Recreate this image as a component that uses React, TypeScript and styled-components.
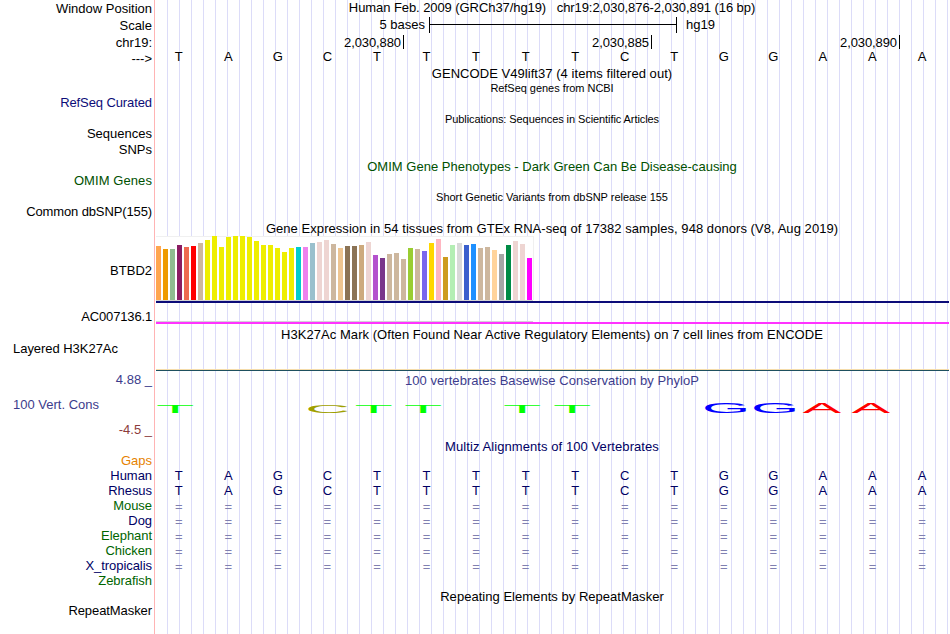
import React from 'react';
import styled, { createGlobalStyle } from 'styled-components';

interface ITextProps {
  gap?: number;
  color?: string;
  spacing?: number;
}

interface ILabelProps extends ITextProps {
  align?: 'left' | 'right';
}

interface ITitleProps extends ITextProps {
  small?: boolean;
}

interface IRuleProps {
  gap?: number;
  size: number;
  color: string;
  length?: string;
}

const GlobalStyle = createGlobalStyle`
  body {
    margin: 0;
    background: #fff;
    font-family: 'Liberation Sans', Arial, Helvetica, sans-serif;
    font-size: 13px;
    line-height: 15px;
    color: #000;
  }
`;

const Browser = styled.div`
  display: flex;
  width: 949px;
  height: 634px;
  overflow: hidden;
`;

const Labels = styled.div`
  box-sizing: border-box;
  width: 155px;
  flex: none;
  padding: 1px 2px 0 13px;
  border-right: 1px solid #ffb4b4;
`;

const Label = styled.div<ILabelProps>`
  height: 15px;
  margin-top: ${props => props.gap || 0}px;
  text-align: ${props => props.align || 'right'};
  color: ${props => props.color || '#000'};
  letter-spacing: ${props => props.spacing || 0}px;
  white-space: pre;
`;

const Tracks = styled.div`
  flex: 1;
  min-width: 0;
  background: repeating-linear-gradient(
    to right,
    transparent 0 11px,
    #dcdcf8 11px 12px
  );
  background-position: 1px 0;
`;

const Title = styled.div<ITitleProps>`
  height: 15px;
  margin-top: ${props => props.gap || 0}px;
  font-size: ${props => (props.small ? 11 : 13)}px;
  letter-spacing: ${props => props.spacing || 0}px;
  color: ${props => props.color || '#000'};
  text-align: center;
  white-space: pre;
`;

const ScaleRow = styled.div`
  display: flex;
  height: 17px;
  margin-top: 2px;
`;

const ScaleText = styled.div<{ side: 'left' | 'right' }>`
  box-sizing: border-box;
  ${props =>
    props.side === 'left'
      ? `width: 274px; padding-right: 4px; text-align: right;`
      : `padding-left: 9px;`}
`;

const ScaleBar = styled.div`
  box-sizing: border-box;
  width: 248px;
  height: 16px;
  display: flex;
  align-items: center;
  border: solid #000;
  border-width: 0 1px;
  &::after {
    content: '';
    flex: 1;
    height: 1px;
    background: #000;
    margin-bottom: 1px;
  }
`;

const Ruler = styled.div`
  display: flex;
  height: 14px;
  margin-top: 1px;
  letter-spacing: -0.1px;
`;

const RulerMark = styled.div<{ width: number }>`
  box-sizing: border-box;
  display: flex;
  justify-content: flex-end;
  width: ${props => props.width}px;
  &::after {
    content: '';
    width: 1px;
    height: 14px;
    margin-left: 2px;
    background: #000;
  }
`;

const BaseRow = styled.div<{ gap?: number; color?: string; drop?: number }>`
  box-sizing: border-box;
  display: grid;
  grid-template-columns: repeat(16, 49.56px);
  width: 794px;
  height: 15px;
  margin-top: ${props => props.gap || 0}px;
  margin-left: -1px;
  padding-top: ${props => props.drop || 0}px;
  text-align: center;
  color: ${props => props.color || '#000'};
`;

const Rule = styled.div<IRuleProps>`
  width: ${props => props.length || 'auto'};
  height: ${props => props.size}px;
  margin: ${props => props.gap || 0}px 0 0 1px;
  background: ${props => props.color};
`;

const Expression = styled.div`
  box-sizing: border-box;
  display: flex;
  align-items: flex-end;
  gap: 2px;
  width: 378px;
  height: 64px;
  margin-left: 1px;
  background: #fff;
  box-shadow: inset -1px 1px 0 #f0f0f0;
`;

const Bar = styled.div<{ height: number; color: string }>`
  width: 5px;
  height: ${props => props.height}px;
  background: ${props => props.color};
`;

const Logo = styled.svg`
  display: block;
  margin-top: 10px;
  font-family: 'Liberation Sans', Arial, sans-serif;
  font-size: 10px;
`;

const NAVY = '#000064';
const GREEN = '#006400';
const YELLOW = '#eeee00';

const bases = 'TAGCTTTTTCTGGAAA'.split('');

// median expression per tissue: [height, tissue color]
const tissues: [number, string][] = [
  [54, '#ffa54f'],
  [51, '#ee9a00'],
  [51, '#8fbc8f'],
  [55, '#8b1c62'],
  [53, '#ee6a50'],
  [54, '#ff0000'],
  [57, '#cdb79e'],
  [60, YELLOW],
  [64, YELLOW],
  [53, YELLOW],
  [63, YELLOW],
  [64, YELLOW],
  [64, YELLOW],
  [63, YELLOW],
  [59, YELLOW],
  [55, YELLOW],
  [55, YELLOW],
  [52, YELLOW],
  [48, YELLOW],
  [52, YELLOW],
  [53, '#00cdcd'],
  [53, '#ee82ee'],
  [57, '#9ac0cd'],
  [58, '#eed5d2'],
  [60, '#eed5d2'],
  [56, '#cdb79e'],
  [52, '#eec591'],
  [54, '#8b7355'],
  [54, '#8b7355'],
  [55, '#cdaa7d'],
  [58, '#eed5d2'],
  [45, '#b452cd'],
  [42, '#7a378b'],
  [46, '#cdb79e'],
  [47, '#cdb79e'],
  [41, '#cdb79e'],
  [52, '#9acd32'],
  [51, '#cdb79e'],
  [49, '#7a67ee'],
  [57, '#ffd700'],
  [61, '#ffb6c1'],
  [43, '#cd9b1d'],
  [55, '#b4eeb4'],
  [57, '#d9d9d9'],
  [55, '#3a5fcd'],
  [56, '#1e90ff'],
  [52, '#cdb79e'],
  [53, '#cdb79e'],
  [50, '#ffd39b'],
  [46, '#a6a6a6'],
  [55, '#008b45'],
  [59, '#eed5d2'],
  [56, '#eed5d2'],
  [42, '#ff00ff'],
];

// ink extents of each letter at font-size 10
const glyphs: Record<string, { x: number; w: number; y: number; h: number; color: string }> = {
  T: { x: 0.22, w: 5.68, y: 0, h: 6.88, color: '#00ff00' },
  C: { x: 0.5, w: 6.3, y: 0.1, h: 7.08, color: '#a0a000' },
  G: { x: 0.5, w: 6.6, y: 0.1, h: 7.08, color: '#0000ff' },
  A: { x: 0.02, w: 6.63, y: 0, h: 6.88, color: '#ff0000' },
};

// [letter, left, width, height]
const conservation: [string, number, number, number][] = [
  ['T', 2.3, 35.7, 8],
  ['C', 153.3, 39, 7.8],
  ['T', 201, 35.7, 8],
  ['T', 250.3, 35.7, 8],
  ['T', 349.3, 35.7, 8],
  ['T', 399.3, 35.7, 8],
  ['G', 550, 41, 9.8],
  ['G', 599, 41, 9.8],
  ['A', 647.5, 38.5, 10.6],
  ['A', 696.5, 38.5, 10.6],
];

interface IBaseLettersProps {
  letters: string[];
  gap?: number;
  color?: string;
  drop?: number;
}

const BaseLetters = ({ letters, ...rest }: IBaseLettersProps) => (
  <BaseRow {...rest}>
    {letters.map((letter, i) => (
      <span key={i}>{letter}</span>
    ))}
  </BaseRow>
);

const ConservationLogo = () => (
  <Logo width="794" height="20">
    {conservation.map(([letter, left, width, height]) => {
      const g = glyphs[letter];
      const sx = width / g.w;
      const sy = height / g.h;
      return (
        <text
          key={left}
          fill={g.color}
          transform={`translate(${left - g.x * sx} ${15 - g.y * sy}) scale(${sx} ${sy})`}
        >
          {letter}
        </text>
      );
    })}
  </Logo>
);

const species: [string, string][] = [
  ['Human', NAVY],
  ['Rhesus', NAVY],
  ['Mouse', GREEN],
  ['Dog', NAVY],
  ['Elephant', GREEN],
  ['Chicken', GREEN],
  ['X_tropicalis', NAVY],
  ['Zebrafish', GREEN],
];

const App = () => {
  return (
    <>
      <GlobalStyle />
      <Browser>
        <Labels>
          <Label>Window Position</Label>
          <Label gap={2}>Scale</Label>
          <Label gap={2}>chr19:</Label>
          <Label gap={1}>---&gt;</Label>
          <Label gap={29} color="#0c0c78" spacing={-0.1}>RefSeq Curated</Label>
          <Label gap={16}>Sequences</Label>
          <Label gap={1}>SNPs</Label>
          <Label gap={16} color="#005000" spacing={0.08}>OMIM Genes</Label>
          <Label gap={16} spacing={-0.12}>Common dbSNP(155)</Label>
          <Label gap={44}>BTBD2</Label>
          <Label gap={31} spacing={-0.15}>AC007136.1</Label>
          <Label gap={17} align="left" spacing={-0.04}>Layered H3K27Ac</Label>
          <Label gap={16} color="#3c3c8c">4.88 _</Label>
          <Label gap={10} color="#3c3c8c" align="left">100 Vert. Cons</Label>
          <Label gap={10} color="#8c3c3c">-4.5 _</Label>
          <Label gap={16} color="#e68200">Gaps</Label>
          {species.map(([name, color]) => (
            <Label key={name} color={color} spacing={-0.05}>{name}</Label>
          ))}
          <Label gap={15} spacing={-0.08}>RepeatMasker</Label>
        </Labels>
        <Tracks>
          <Title spacing={-0.075}>Human Feb. 2009 (GRCh37/hg19)   chr19:2,030,876-2,030,891 (16 bp)</Title>
          <ScaleRow>
            <ScaleText side="left">5 bases</ScaleText>
            <ScaleBar />
            <ScaleText side="right">hg19</ScaleText>
          </ScaleRow>
          <Ruler>
            <RulerMark width={249}>2,030,880</RulerMark>
            <RulerMark width={248}>2,030,885</RulerMark>
            <RulerMark width={248}>2,030,890</RulerMark>
          </Ruler>
          <BaseLetters letters={bases} />
          <Title gap={2} spacing={0.05}>GENCODE V49lift37 (4 items filtered out)</Title>
          <Title small spacing={-0.04}>RefSeq genes from NCBI</Title>
          <Title small gap={16} spacing={-0.08}>Publications: Sequences in Scientific Articles</Title>
          <Title gap={32} color="#005000" spacing={0.02}>OMIM Gene Phenotypes - Dark Green Can Be Disease-causing</Title>
          <Title small gap={16} spacing={-0.03}>Short Genetic Variants from dbSNP release 155</Title>
          <Title gap={16} spacing={0.055}>Gene Expression in 54 tissues from GTEx RNA-seq of 17382 samples, 948 donors (V8, Aug 2019)</Title>
          <Expression>
            {tissues.map(([height, color], i) => (
              <Bar key={i} height={height} color={color} />
            ))}
          </Expression>
          <Rule size={1} color="#d2d2d2" length="377px" />
          <Rule size={2} color="#0c0c78" />
          <Rule gap={18} size={1} color="#d2d2d2" length="377px" />
          <Rule size={2} color="#ff33ff" />
          <Title gap={3} spacing={0.05}>H3K27Ac Mark (Often Found Near Active Regulatory Elements) on 7 cell lines from ENCODE</Title>
          <Rule gap={27} size={1} color="#f5dcaa" />
          <Rule size={1} color="#1e505f" />
          <Title gap={2} color="#3c3c8c" spacing={0.04}>100 vertebrates Basewise Conservation by PhyloP</Title>
          <ConservationLogo />
          <Title gap={21} color={NAVY} spacing={0.08}>Multiz Alignments of 100 Vertebrates</Title>
          <BaseLetters gap={14} letters={bases} color={NAVY} />
          <BaseLetters letters={bases} color={NAVY} />
          {species.slice(2, 7).map(([name]) => (
            <BaseLetters key={name} letters={bases.map(() => '=')} color="#8080b1" drop={1} />
          ))}
          <Title gap={16} spacing={0.03}>Repeating Elements by RepeatMasker</Title>
        </Tracks>
      </Browser>
    </>
  );
};

export default App;
